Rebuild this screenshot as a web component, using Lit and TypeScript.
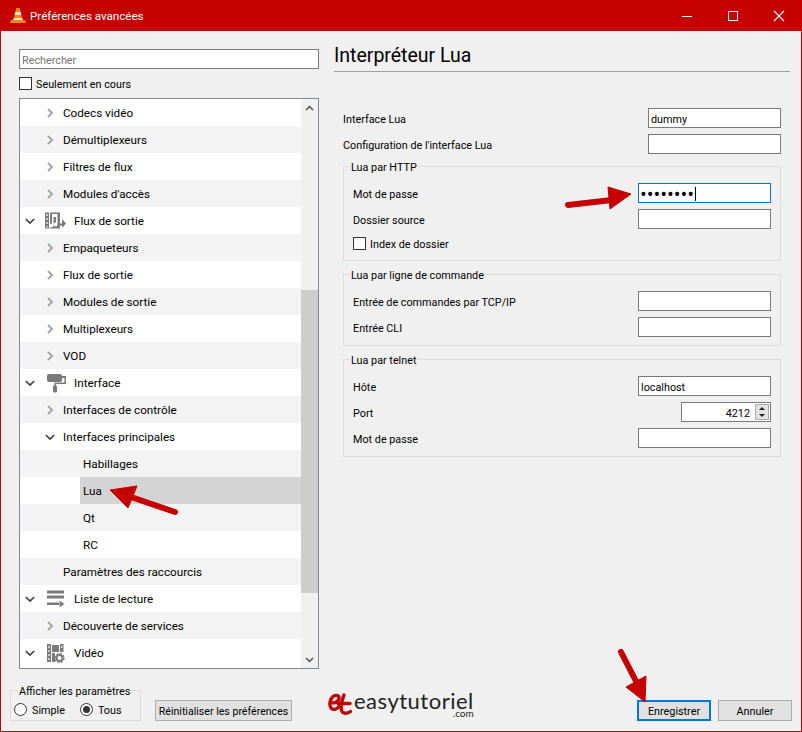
import { LitElement, html, css, svg } from "lit";
import { customElement } from "lit/decorators.js";

type Row = { t: string; d: number; exp?: "r" | "d"; icon?: string; sel?: boolean };
const rows: Row[] = [
  { t: "Codecs vidéo", d: 1, exp: "r" },
  { t: "Démultiplexeurs", d: 1, exp: "r" },
  { t: "Filtres de flux", d: 1, exp: "r" },
  { t: "Modules d'accès", d: 1, exp: "r" },
  { t: "Flux de sortie", d: 0, exp: "d", icon: "stream" },
  { t: "Empaqueteurs", d: 1, exp: "r" },
  { t: "Flux de sortie", d: 1, exp: "r" },
  { t: "Modules de sortie", d: 1, exp: "r" },
  { t: "Multiplexeurs", d: 1, exp: "r" },
  { t: "VOD", d: 1, exp: "r" },
  { t: "Interface", d: 0, exp: "d", icon: "roller" },
  { t: "Interfaces de contrôle", d: 1, exp: "r" },
  { t: "Interfaces principales", d: 1, exp: "d" },
  { t: "Habillages", d: 2 },
  { t: "Lua", d: 2, sel: true },
  { t: "Qt", d: 2 },
  { t: "RC", d: 2 },
  { t: "Paramètres des raccourcis", d: 1 },
  { t: "Liste de lecture", d: 0, exp: "d", icon: "list" },
  { t: "Découverte de services", d: 1, exp: "r" },
  { t: "Vidéo", d: 0, exp: "d", icon: "video" },
];

const icons: Record<string, unknown> = {
  stream: svg`<svg class="ticon" viewBox="0 0 21 20" fill="#7a7a7a">
    <path d="M0 1.500h4v16H0zM5 1.500h10v11h2V8l4 4.500-4 4.500v-2.500h-2v3H5z"/>
    <path d="M1.300 3h1.400v2H1.300zM1.300 7h1.400v2H1.300zM1.300 11h1.400v2H1.300zM1.300 15h1.400v1.500H1.300z" fill="#e8e8e8"/>
    <path d="M12.500 3v10.500a2 2 0 1 1-1.500-2V6H8.500v8.500a2 2 0 1 1-1.500-2V3z" fill="#fff"/></svg>`,
  roller: svg`<svg class="ticon" viewBox="0 0 21 20" fill="#7a7a7a">
    <rect x="2" y="1" width="15" height="8" rx="2"/>
    <path d="M17 3h4v8H11v2H9.500v-3.500H19.500V5H17z"/>
    <rect x="8" y="12.500" width="4" height="7" rx="1.200"/></svg>`,
  list: svg`<svg class="ticon" viewBox="0 0 21 20" fill="#7a7a7a">
    <path d="M2 1.500h17v3H2zM2 6.500h17v3H2zM2 13.500h12v2.500H2z"/>
    <path d="M14.500 11.500l5 3.500-5 3.500z"/></svg>`,
  video: svg`<svg class="ticon" viewBox="0 0 21 20" fill="#7a7a7a">
    <path d="M2 1h4v18H2zM7 2h7v7H7zM7 10h3v9H7zM15 1h3.500v8H15z"/>
    <path d="M3.300 3h1.400v2H3.300zM3.300 7h1.400v2H3.300zM3.300 11h1.400v2H3.300zM3.300 15h1.400v2H3.300zM16 3h1.400v2H16z" fill="#e8e8e8"/>
    <circle cx="14.500" cy="15" r="3" fill="none" stroke="#7a7a7a" stroke-width="2"/>
    <circle cx="14.500" cy="15" r="4.500" fill="none" stroke="#7a7a7a" stroke-width="1.400" stroke-dasharray="2 1.500"/></svg>`,
};

const chevR = svg`<svg class="chev" viewBox="0 0 10 10"><path d="M3 1l4 4-4 4" fill="none" stroke="#a6a6a6" stroke-width="2"/></svg>`;
const chevD = svg`<svg class="chev" viewBox="0 0 10 10"><path d="M.800 3l4.200 4 4.200-4" fill="none" stroke="#404040" stroke-width="1.700"/></svg>`;

@customElement("app-root")
export class AppRoot extends LitElement {
  static styles = css`
    :host {
      display: block;
      width: 802px;
      height: 732px;
      position: relative;
      overflow: hidden;
      background: #f0f0f0;
      font-family: "Roboto", "Open Sans", sans-serif;
      font-size: 10.800px;
      color: #000;
      box-sizing: border-box;
    }
    * { box-sizing: border-box; }
    .win {
      width: 802px;
      height: 732px;
      display: flex;
      flex-direction: column;
      border: 1px solid #c40000;
      border-top: none;
    }
    .titlebar {
      height: 31px;
      margin: 0 -1px;
      background: #c40000;
      color: #fff;
      display: flex;
      align-items: center;
      padding-left: 10px;
      font-size: 11.600px;
      flex: none;
    }
    .titlebar .cone { width: 16px; height: 17px; margin-right: 4px; }
    .titlebar .ttl { flex: 1; }
    .wbtn { width: 46px; height: 31px; display: flex; align-items: center; justify-content: center; }
    .wbtn svg { width: 12px; height: 12px; display: block; }
    .main { flex: 1; display: flex; min-height: 0; }
    .left { width: 317px; flex: none; padding: 18px 0 0 18px; display: flex; flex-direction: column; }
    .search {
      height: 20px;
      width: 300px;
      border: 1px solid #7a7a7a;
      background: #fff;
      color: #757575;
      padding: 2px 0 0 2px;
      display: flex;
      align-items: center;
    }
    .only { display: flex; align-items: center; gap: 4px; height: 13px; margin-top: 8px; margin-bottom: 1px; }
    .only span { padding-top: 2px; }
    .cb { width: 13px; height: 13px; border: 1px solid #333; background: #fff; flex: none; }
    .tree {
      margin-top: 7px;
      width: 300px;
      height: 571px;
      border: 1px solid #828790;
      background: #fff;
      display: flex;
      font-size: 11.700px;
    }
    .rows { width: 281px; flex: none; }
    .row { height: 27px; display: flex; align-items: center; position: relative; background: #fff; }
    .row.alt { background: #f3f3f3; }
    .row.d0 .chevcell { margin-left: 5px; }
    .row.d1 .chevcell { margin-left: 25px; }
    .chevcell { width: 10px; height: 10px; flex: none; }
    .chev { width: 10px; height: 10px; display: block; }
    .ticon { width: 21px; height: 20px; margin-left: 10px; flex: none; display: block; }
    .row.d0 .lbl { margin-left: 8px; }
    .row.d1 .lbl { position: absolute; left: 43px; }
    .row.d2 .lbl { position: absolute; left: 63px; }
    .row.sel .selbg { position: absolute; left: 60px; right: 0; top: 0; bottom: 0; background: #d4d4d4; }
    .lbl { position: relative; white-space: nowrap; }
    .sbar { width: 17px; background: #f0f0f0; display: flex; flex-direction: column; flex: 1; }
    .sarrow { height: 17px; display: flex; align-items: center; justify-content: center; flex: none; }
    .sarrow svg { width: 9px; height: 6px; display: block; }
    .strack { flex: 1; padding-top: 174px; padding-bottom: 58px; display: flex; }
    .sthumb { flex: 1; background: #cdcdcd; }

    .right { flex: 1; padding: 12px 11px 0 16px; min-width: 0; }
    .h1 { font-size: 19.500px; line-height: 22px; height: 29px; border-bottom: 1px solid #a0a0a0; padding-top: 2px; }
    .form { padding: 36px 9px 0 9px; }
    .frow { display: flex; align-items: center; justify-content: space-between; height: 20px; white-space: nowrap; }
    .frow > span { padding-top: 2px; }
    .frow + .frow { margin-top: 6px; }
    .inp {
      width: 133px;
      height: 20px;
      border: 1px solid #7a7a7a;
      background: #fff;
      padding: 2px 0 0 2px;
      display: flex;
      align-items: center;
      flex: none;
    }
    .inp.focus { border-color: #0078d7; font-size: 18px; line-height: 1; padding-left: 1px; font-family: "Open Sans", sans-serif; }
    .caret { width: 1px; height: 14px; background: #000; margin-left: 1px; }
    .grp { position: relative; border: 1px solid #dcdcdc; padding: 16px 9px 8px 9px; margin-top: 13px; }
    .grp.first { margin-top: 12px; padding-bottom: 10px; }
    .leg {
      position: absolute;
      top: -6px;
      left: 6px;
      padding: 0 1px;
      background: #f0f0f0;
      line-height: 14px;
      white-space: nowrap;
    }
    .check { display: flex; align-items: center; gap: 4px; margin-top: 8px; height: 13px; }
    .check span { padding-top: 2px; }
    .spin { width: 90px; padding: 0 1px 0 0; justify-content: flex-end; gap: 5px; }
    .spin span { padding-top: 2px; }
    .spinb { width: 14px; height: 16px; display: flex; flex-direction: column; background: #e3e3e3; border: 1px solid #adadad; flex: none; }
    .spinb svg { width: 12px; height: 7px; display: block; }

    .bottom { height: 62px; flex: none; display: flex; position: relative; align-items: flex-start; padding-left: 9px; white-space: nowrap; }
    .showgrp { width: 131px; height: 31px; margin-top: 21px; border: 1px solid #dcdcdc; position: relative; display: flex; align-items: center; padding: 7px 0 0 3px; }
    .showgrp .leg { left: 7px; }
    .radio { display: flex; align-items: center; gap: 5px; margin-right: 15px; }
    .radio span.t { padding-top: 2px; }
    .rd { width: 13px; height: 13px; border-radius: 50%; border: 1px solid #333; background: #fff; display: flex; align-items: center; justify-content: center; flex: none; }
    .rd.on::after { content: ""; width: 7px; height: 7px; border-radius: 50%; background: #333; }
    .btn { height: 21px; border: 1px solid #adadad; background: #e1e1e1; display: flex; align-items: center; justify-content: center; flex: none; margin-top: 31px; padding-top: 2px; }
    .reset { width: 137px; margin-left: 14px; font-size: 10.600px; }
    .logo { display: flex; align-items: flex-start; margin-left: 36px; margin-top: 23px; width: 148px; flex: none; }
    .logo svg { width: 26px; height: 24px; flex: none; display: block; }
    .logotxt { position: relative; line-height: 18px; font-family: "Lato", sans-serif; font-size: 22px; letter-spacing: 0.500px; color: #222; }
    .logotxt small { position: absolute; right: 0; top: 16px; font-size: 10px; line-height: 10px; letter-spacing: 0; }
    .spacer { flex: 1; }
    .save { width: 74px; border: 2px solid #0078d7; margin-right: 7px; }
    .cancel { width: 74px; margin-right: 9px; }

    .overlay { position: absolute; left: 0; top: 0; width: 802px; height: 732px; pointer-events: none; }
  `;

  private field(label: string, value = "") {
    return html`<div class="frow"><span>${label}</span><div class="inp">${value}</div></div>`;
  }

  render() {
    return html`
      <div class="win">
        <div class="titlebar">
          <svg class="cone" viewBox="0 0 16 17">
            <path d="M6.300 1h3.400l1 4H5.300z" fill="#ff8a00"/>
            <path d="M5.300 5h5.400l.7 3H4.600z" fill="#e8e4df"/>
            <path d="M4.600 8h6.800l.9 4.500H3.700z" fill="#ff8a00"/>
            <path d="M3.700 11h8.600l.6 2H3.100z" fill="#e8e4df"/>
            <path d="M1 13h14l1 3H0z" fill="#f58a0b"/>
          </svg>
          <span class="ttl">Préférences avancées</span>
          <div class="wbtn"><svg viewBox="0 0 12 12"><path d="M1 6.500h10" stroke="#fff" stroke-width="1"/></svg></div>
          <div class="wbtn"><svg viewBox="0 0 12 12"><rect x="1.500" y="1.500" width="9" height="9" fill="none" stroke="#fff"/></svg></div>
          <div class="wbtn"><svg viewBox="0 0 12 12"><path d="M1 1l10 10M11 1L1 11" stroke="#fff" stroke-width="1.100"/></svg></div>
        </div>
        <div class="main">
          <div class="left">
            <div class="search">Rechercher</div>
            <div class="only"><div class="cb"></div><span>Seulement en cours</span></div>
            <div class="tree">
              <div class="rows">
                ${rows.map(
                  (r, i) => html`<div class="row d${r.d} ${i % 2 ? "alt" : ""} ${r.sel ? "sel" : ""}">
                    ${r.sel ? html`<div class="selbg"></div>` : ""}
                    ${r.exp ? html`<div class="chevcell">${r.exp === "r" ? chevR : chevD}</div>` : ""}
                    ${r.icon ? icons[r.icon] : ""}
                    <span class="lbl">${r.t}</span>
                  </div>`
                )}
              </div>
              <div class="sbar">
                <div class="sarrow"><svg viewBox="0 0 9 6"><path d="M1 5l3.500-3.500L8 5" fill="none" stroke="#505050" stroke-width="1.500"/></svg></div>
                <div class="strack"><div class="sthumb"></div></div>
                <div class="sarrow"><svg viewBox="0 0 9 6"><path d="M1 1l3.500 3.500L8 1" fill="none" stroke="#505050" stroke-width="1.500"/></svg></div>
              </div>
            </div>
          </div>
          <div class="right">
            <div class="h1">Interpréteur Lua</div>
            <div class="form">
              ${this.field("Interface Lua", "dummy")}
              ${this.field("Configuration de l'interface Lua")}
              <div class="grp first">
                <span class="leg">Lua par HTTP</span>
                <div class="frow"><span>Mot de passe</span><div class="inp focus">••••••••<span class="caret"></span></div></div>
                ${this.field("Dossier source")}
                <div class="check"><div class="cb"></div><span>Index de dossier</span></div>
              </div>
              <div class="grp">
                <span class="leg">Lua par ligne de commande</span>
                ${this.field("Entrée de commandes par TCP/IP")}
                ${this.field("Entrée CLI")}
              </div>
              <div class="grp">
                <span class="leg">Lua par telnet</span>
                ${this.field("Hôte", "localhost")}
                <div class="frow"><span>Port</span><div class="inp spin"><span>4212</span><div class="spinb">
                  <svg viewBox="0 0 12 7"><path d="M6 2l3 3H3z" fill="#222"/></svg>
                  <svg viewBox="0 0 12 7"><path d="M3 2h6L6 5z" fill="#222"/></svg>
                </div></div></div>
                ${this.field("Mot de passe")}
              </div>
            </div>
          </div>
        </div>
        <div class="bottom">
          <div class="showgrp">
            <span class="leg">Afficher les paramètres</span>
            <label class="radio"><span class="rd"></span><span class="t">Simple</span></label>
            <label class="radio"><span class="rd on"></span><span class="t">Tous</span></label>
          </div>
          <div class="btn reset">Réinitialiser les préférences</div>
          <div class="logo">
            <svg viewBox="0 0 26 24" fill="none" stroke="#c40000" stroke-width="3.400" stroke-linecap="round">
              <path d="M3 10.500c3 1 8-.5 8-4.500 0-3-4-3.500-6.500-1C1.500 8 1 14 3.500 16.500c2.500 2 6 .5 9-3.500"/>
              <path d="M16 3c-2 5-3.500 10-2.500 15 .5 3.500 5 4.500 9 1.500"/>
              <path d="M10 11.500h12"/>
            </svg>
            <div class="logotxt">easytutoriel<small>.com</small></div>
          </div>
          <div class="spacer"></div>
          <div class="btn save">Enregistrer</div>
          <div class="btn cancel">Annuler</div>
        </div>
      </div>
      <svg class="overlay" viewBox="0 0 802 732">
        <g fill="#c40000" stroke="#c40000" stroke-linejoin="round">
          <path d="M175 512L131 497" stroke-width="6" stroke-linecap="round"/>
          <path d="M110 490L137 486L128 508z" stroke-width="1"/>
          <path d="M568 205L612 200" stroke-width="6" stroke-linecap="round"/>
          <path d="M631 194L608 187L610 209z" stroke-width="1"/>
          <path d="M621 652L640 689" stroke-width="6" stroke-linecap="round"/>
          <path d="M645 702L626 687L646 676z" stroke-width="1"/>
        </g>
      </svg>
    `;
  }
}
